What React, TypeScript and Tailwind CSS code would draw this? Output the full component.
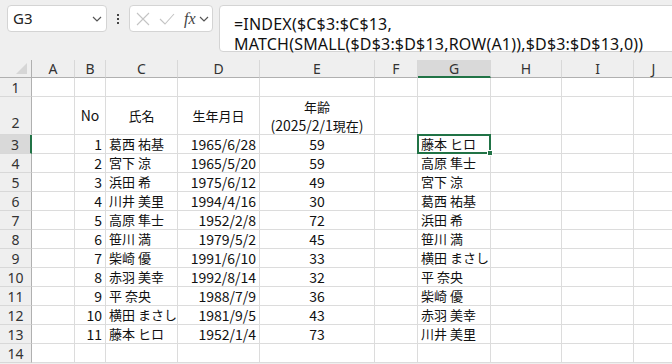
import React from "react";

const cols = ["A", "B", "C", "D", "E", "F", "G", "H", "I", "J"];

const people: [number, string, string, number, string][] = [
  [1, "葛西 祐基", "1965/6/28", 59, "藤本 ヒロ"],
  [2, "宮下 涼", "1965/5/20", 59, "高原 隼士"],
  [3, "浜田 希", "1975/6/12", 49, "宮下 涼"],
  [4, "川井 美里", "1994/4/16", 30, "葛西 祐基"],
  [5, "高原 隼士", "1952/2/8", 72, "浜田 希"],
  [6, "笹川 満", "1979/5/2", 45, "笹川 満"],
  [7, "柴崎 優", "1991/6/10", 33, "横田 まさし"],
  [8, "赤羽 美幸", "1992/8/14", 32, "平 奈央"],
  [9, "平 奈央", "1988/7/9", 36, "柴崎 優"],
  [10, "横田 まさし", "1981/9/5", 43, "赤羽 美幸"],
  [11, "藤本 ヒロ", "1952/1/4", 73, "川井 美里"],
];

const cellFont = "font-['Noto_Sans_CJK_JP',sans-serif] text-[14px] text-[#111]";
const hdrFont = "font-['Noto_Sans',sans-serif] text-[14px] text-[#333]";

function Chevron({ className }: { className?: string }) {
  return (
    <svg width="10" height="6" viewBox="0 0 10 6" className={className}>
      <path d="M1 1l4 4 4-4" fill="none" stroke="#555" strokeWidth="1.2" />
    </svg>
  );
}

function FormulaBar() {
  return (
    <div className="h-[60px] flex items-start pt-[5px] pl-[7px]">
      <div className="shrink-0 w-[100px] h-[27px] bg-white border border-[#d4d4d4] rounded-[4px] flex items-center justify-between pl-[5px] pr-[4px]">
        <span className="font-['Noto_Sans',sans-serif] text-[15px] text-[#222]">G3</span>
        <Chevron />
      </div>
      <div className="shrink-0 w-[22px] h-[27px] flex flex-col items-center justify-center gap-[2px]">
        <span className="w-[2px] h-[2px] bg-[#444]" />
        <span className="w-[2px] h-[2px] bg-[#444]" />
        <span className="w-[2px] h-[2px] bg-[#444]" />
      </div>
      <div className="shrink-0 w-[84px] h-[27px] bg-white border border-[#d4d4d4] rounded-[4px] flex items-center pl-[6px]">
        <svg width="14" height="14" viewBox="0 0 14 14">
          <path d="M1 1l12 12M13 1L1 13" stroke="#c4c4c4" strokeWidth="1.1" />
        </svg>
        <svg width="16" height="12" viewBox="0 0 16 12" className="ml-[9px]">
          <path d="M1 6l5 5L15 1" fill="none" stroke="#c4c4c4" strokeWidth="1.1" />
        </svg>
        <span className="ml-[9px] font-['Liberation_Serif',serif] italic text-[16px] text-[#444] leading-none">fx</span>
        <Chevron className="ml-[3px]" />
      </div>
      <div className="shrink-0 ml-[6px] w-[470px] h-[47px] bg-white border border-[#d4d4d4] rounded-[4px] pl-[14px] pt-[8px] font-['Noto_Sans',sans-serif] text-[16px] tracking-[0.2px] leading-[20px] text-[#111] whitespace-nowrap">
        <div>=INDEX($C$3:$C$13,</div>
        <div>MATCH(SMALL($D$3:$D$13,ROW(A1)),$D$3:$D$13,0))</div>
      </div>
    </div>
  );
}

function Cell({
  children,
  className = "",
}: {
  children?: React.ReactNode;
  className?: string;
}) {
  return (
    <div className={`border-r border-b border-[#dcdcdc] bg-white flex items-center px-[3px] ${cellFont} ${className}`}>
      {children}
    </div>
  );
}

export default function App() {
  const rows: React.ReactNode[][] = [];

  // row 1: empty
  rows.push(cols.map(() => null));
  // row 2: headers
  rows.push([
    null,
    <span className="w-full text-center">No</span>,
    <span className="w-full text-center text-[13px]">氏名</span>,
    <span className="w-full text-center text-[13px]">生年月日</span>,
    <span className="w-full text-center leading-[19px]">
      <span className="text-[13px]">年齢</span>
      <br />
      (2025/2/1<span className="text-[13px]">現在</span>)
    </span>,
    null, null, null, null, null,
  ]);
  people.forEach(([no, name, date, age, sorted]) => {
    rows.push([
      null,
      <span className="w-full text-right">{no}</span>,
      <span className="whitespace-nowrap text-[13px]">{name}</span>,
      <span className="w-full text-right">{date}</span>,
      <span className="w-full text-center">{age}</span>,
      null,
      <span className="whitespace-nowrap text-[13px]">{sorted}</span>,
      null, null, null,
    ]);
  });
  rows.push(cols.map(() => null));

  return (
    <div className="w-[672px] h-[364px] bg-[#efefef] overflow-hidden">
      <FormulaBar />
      <div className="grid grid-cols-[32px_43px_31px_72px_82px_115px_43px_73px_71px_72px_40px] grid-rows-[18px_19px_38px_repeat(12,19px)]">
        {/* corner */}
        <div className="relative border-r border-b border-[#b0b0b0] bg-[#efefef]">
          <svg width="11" height="11" viewBox="0 0 11 11" className="absolute right-[4px] bottom-[3px]">
            <path d="M11 0V11H0Z" fill="#d6d6d6" />
          </svg>
        </div>
        {cols.map((c) => (
          <div
            key={c}
            className={`border-r border-[#d8d8d8] flex items-center justify-center ${hdrFont} ${
              c === "G"
                ? "bg-[#d9d9d9] border-b-2 border-b-[#217346] text-[#1e6b41]"
                : "bg-[#efefef] border-b border-b-[#b0b0b0]"
            }`}
          >
            {c}
          </div>
        ))}
        {rows.map((row, ri) => {
          const n = ri + 1;
          return (
            <React.Fragment key={n}>
              <div
                className={`border-b border-[#d8d8d8] flex justify-center ${hdrFont} ${
                  n === 2 ? "items-end pb-[1px]" : "items-center"
                } ${
                  n === 3
                    ? "bg-[#d9d9d9] border-r-2 border-r-[#217346] text-[#1e6b41]"
                    : "bg-[#efefef] border-r border-r-[#b0b0b0]"
                }`}
              >
                {n}
              </div>
              {row.map((content, ci) => (
                <Cell
                  key={ci}
                  className={n === 3 && ci === 6 ? "relative" : ""}
                >
                  {content}
                  {n === 3 && ci === 6 && (
                    <div className="absolute left-[-1px] top-[-1px] right-[-1px] bottom-[-1px] border-2 border-[#217346]">
                      <div className="absolute right-[-4px] bottom-[-4px] w-[6px] h-[6px] bg-[#217346] border border-white" />
                    </div>
                  )}
                </Cell>
              ))}
            </React.Fragment>
          );
        })}
      </div>
    </div>
  );
}
